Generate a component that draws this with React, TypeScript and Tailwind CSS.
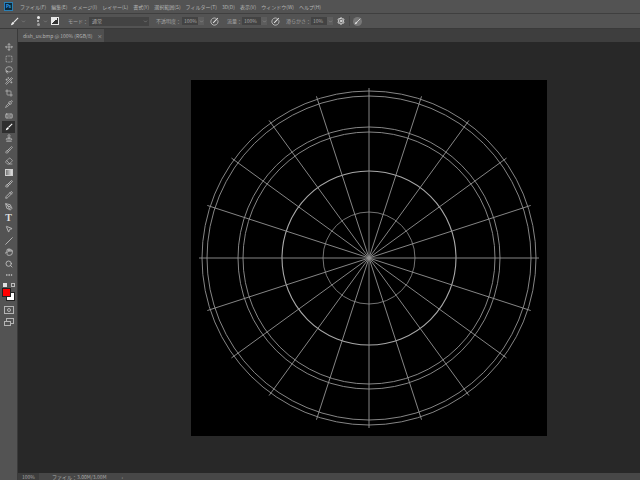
import { Move, SquareDashed, Lasso, Wand2, Crop, Pipette, Bandage, Stamp, Brush, Eraser, Pencil, PenTool, MousePointer2, Slash, Hand, Search, MoreHorizontal, ChevronDown, Settings } from "lucide-react"

const menus = ["ファイル(F)", "編集(E)", "イメージ(I)", "レイヤー(L)", "書式(Y)", "選択範囲(S)", "フィルター(T)", "3D(D)", "表示(V)", "ウィンドウ(W)", "ヘルプ(H)"]

function BrushIcon({ className }: { className: string }) {
  return (
    <svg className={className} viewBox="0 0 10 10" fill="none">
      <path d="M9 1L4.4 5.6" stroke="currentColor" strokeWidth="1.3" />
      <path d="M1 9.2C1.4 7.4 2.2 5.8 3.6 5.4L4.8 6.6C4.4 8 2.8 8.8 1 9.2Z" fill="currentColor" />
    </svg>
  )
}

const topTools = [Move, SquareDashed, Lasso, Wand2, Crop, Pipette, Bandage, BrushIcon, Stamp, Brush, Eraser]

function Rays() {
  const lines = []
  for (let i = 0; i < 20; i++) {
    const a = (i * 18 * Math.PI) / 180
    lines.push(
      <line key={i} x1={178} y1={178} x2={178 + 170 * Math.cos(a)} y2={178 + 170 * Math.sin(a)} stroke="#949494" strokeWidth="0.9" />
    )
  }
  return <>{lines}</>
}

function Field({ w, text }: { w: string; text: string }) {
  return (
    <div className={`flex h-[8px] items-center whitespace-nowrap bg-[#434343] pl-[2px] text-[5px] text-[#a8a8a8] ${w}`}>{text}</div>
  )
}

function Caret() {
  return (
    <div className="flex h-[8px] w-[6px] items-center justify-center bg-[#5d5d5d]">
      <ChevronDown className="h-[5px] w-[5px] text-[#aaaaaa]" />
    </div>
  )
}

function PressureIcon({ className }: { className: string }) {
  return (
    <svg className={className} viewBox="0 0 10 10" fill="none">
      <path d="M6.5 1.4A4 4 0 1 0 8.6 3.5" stroke="#bdbdbd" strokeWidth="1" />
      <path d="M3.5 6.5L8.6 1.2" stroke="#e0e0e0" strokeWidth="1.2" />
    </svg>
  )
}

export default function App() {
  return (
    <div className="flex h-[480px] w-[640px] flex-col overflow-hidden bg-[#282828] font-['Noto_Sans_CJK_JP','Liberation_Sans',sans-serif]">
      {/* menu bar */}
      <div className="flex h-[14px] items-center border-b border-[#3f3f3f] bg-[#535353]">
        <div className="ml-[4px] mr-[7px] flex h-[9px] w-[9px] items-center justify-center border border-[#2a80b5] bg-[#0b2a3d] text-[4.5px] font-bold leading-none text-[#31a8ff]">Ps</div>
        <div className="flex gap-[5px] whitespace-nowrap text-[5px] leading-none text-[#b4b4b4]">
          {menus.map((m) => (
            <span key={m}>{m}</span>
          ))}
        </div>
      </div>

      {/* options bar */}
      <div className="flex h-[15px] items-center border-b border-[#3a3a3a] bg-[#535353] pl-[10px] text-[5px] text-[#a4a4a4]">
        <BrushIcon className="h-[9px] w-[9px] text-[#e8e8e8]" />
        <ChevronDown className="ml-[2px] h-[5px] w-[5px]" />
        <div className="ml-[10px] flex h-[10px] w-[4px] flex-col items-center justify-between">
          <div className="h-[3px] w-[3px] rounded-full bg-[#e8e8e8]" />
          <div className="h-[2px] w-[2px] rounded-full bg-[#c8c8c8]" />
          <div className="h-[3px] w-[3px] rounded-full bg-[#a0a0a0]" />
        </div>
        <ChevronDown className="ml-[3px] h-[5px] w-[5px]" />
        <div className="ml-[3px] h-[8px] w-[8px] border border-[#e8e8e8] bg-[linear-gradient(135deg,#e8e8e8_50%,#333333_50%)]" />
        <span className="ml-[9px] whitespace-nowrap">モード：</span>
        <div className="ml-[1px] flex h-[9px] w-[60px] items-center justify-between bg-[#434343] pl-[3px] pr-[1px] text-[#a8a8a8]">
          通常
          <ChevronDown className="h-[5px] w-[5px]" />
        </div>
        <span className="ml-[7px] whitespace-nowrap">不透明度：</span>
        <div className="ml-[1px] flex">
          <Field w="w-[16px]" text="100%" />
          <Caret />
        </div>
        <PressureIcon className="ml-[6px] h-[9px] w-[9px]" />
        <span className="ml-[8px] whitespace-nowrap">流量：</span>
        <div className="flex">
          <Field w="w-[19px]" text="100%" />
          <Caret />
        </div>
        <PressureIcon className="ml-[4px] h-[9px] w-[9px]" />
        <span className="ml-[6px] whitespace-nowrap">滑らかさ：</span>
        <div className="flex">
          <Field w="w-[16px]" text="10%" />
          <Caret />
        </div>
        <Settings className="ml-[4px] h-[8px] w-[8px] text-[#e8e8e8]" strokeWidth={3} />
        <div className="ml-[4px] h-[10px] w-px bg-[#474747]" />
        <div className="ml-[3px] flex h-[9px] w-[9px] items-center justify-center rounded-full bg-[#777777]">
          <BrushIcon className="h-[7px] w-[7px] text-[#dddddd]" />
        </div>
      </div>

      <div className="flex min-h-0 flex-1">
        {/* tools */}
        <div className="flex w-[18px] flex-col items-center border-r border-[#3a3a3a] bg-[#535353] pt-[12.5px] text-[#c4c4c4]">
          {topTools.map((Icon, i) => (
            <div key={i} className={`flex h-[11.4px] w-[13px] items-center justify-center ${i === 7 ? "bg-[#2f2f2f] text-white" : ""}`}>
              <Icon className="h-[8px] w-[8px]" />
            </div>
          ))}
          <div className="flex h-[11.4px] w-[13px] items-center justify-center">
            <div className="h-[7px] w-[8px] border border-[#cfcfcf] bg-[linear-gradient(90deg,#777777,#e0e0e0)]" />
          </div>
          {[Brush, Pencil, PenTool].map((Icon, i) => (
            <div key={i} className="flex h-[11.4px] w-[13px] items-center justify-center">
              <Icon className="h-[8px] w-[8px]" strokeWidth={2.5} />
            </div>
          ))}
          <div className="flex h-[11.4px] items-center font-['Liberation_Serif',serif] text-[10px] font-bold leading-none text-[#dddddd]">T</div>
          {[MousePointer2, Slash, Hand, Search, MoreHorizontal].map((Icon, i) => (
            <div key={i} className="flex h-[11.4px] w-[13px] items-center justify-center">
              <Icon className="h-[8px] w-[8px]" strokeWidth={2.5} />
            </div>
          ))}
          <div className="mt-[2px] flex w-[12px] justify-between">
            <div className="h-[4px] w-[4px] bg-[#e0e0e0]" />
            <div className="h-[4px] w-[4px] border border-[#bbbbbb]" />
          </div>
          <div className="relative mt-[1px] h-[13px] w-[13px]">
            <div className="absolute bottom-0 right-0 h-[9px] w-[9px] border border-[#222222] bg-white" />
            <div className="absolute left-0 top-0 h-[9px] w-[9px] border border-[#222222] bg-[#ff0000]" />
          </div>
          <div className="mt-[5px] flex h-[8px] w-[10px] items-center justify-center border border-[#b4b4b4]">
            <div className="h-[4px] w-[4px] rounded-full border border-[#b4b4b4]" />
          </div>
          <div className="relative mt-[4px] h-[8px] w-[10px]">
            <div className="absolute right-0 top-0 h-[6px] w-[8px] border border-[#b4b4b4]" />
            <div className="absolute bottom-0 left-0 h-[5px] w-[7px] border border-[#b4b4b4] bg-[#535353]" />
          </div>
        </div>

        <div className="flex min-w-0 flex-1 flex-col">
          {/* tab bar */}
          <div className="flex h-[13px] bg-[#3e3e3e]">
            <div className="flex w-[86px] items-center gap-[5px] whitespace-nowrap bg-[#4f4f4f] pl-[5px] text-[5px] text-[#b4b4b4]">
              dish_uv.bmp @ 100% (RGB/8)
              <span>×</span>
            </div>
          </div>

          {/* canvas */}
          <div className="flex-1 pl-[173px] pt-[38px]">
            <div className="h-[356px] w-[356px] bg-black">
              <svg width="356" height="356" viewBox="0 0 356 356" fill="none">
                <circle cx="178" cy="178" r="167" stroke="#949494" strokeWidth="0.9" />
                <circle cx="178" cy="178" r="162" stroke="#949494" strokeWidth="0.9" />
                <circle cx="178" cy="178" r="131" stroke="#949494" strokeWidth="0.9" />
                <circle cx="178" cy="178" r="126" stroke="#949494" strokeWidth="0.9" />
                <circle cx="178" cy="178" r="87" stroke="#a8a8a8" strokeWidth="1.1" />
                <circle cx="178" cy="178" r="46" stroke="#808080" strokeWidth="0.9" />
                <Rays />
              </svg>
            </div>
          </div>

          {/* status bar */}
          <div className="flex h-[7px] items-center bg-[#474747] text-[5px] leading-none text-[#a8a8a8]">
            <div className="flex h-full w-[21px] items-center bg-[#3c3c3c] pl-[4px]">100%</div>
            <span className="ml-[13px] whitespace-nowrap">ファイル：3.00M/3.00M</span>
            <span className="ml-[15px]">›</span>
          </div>
        </div>
      </div>
    </div>
  )
}
